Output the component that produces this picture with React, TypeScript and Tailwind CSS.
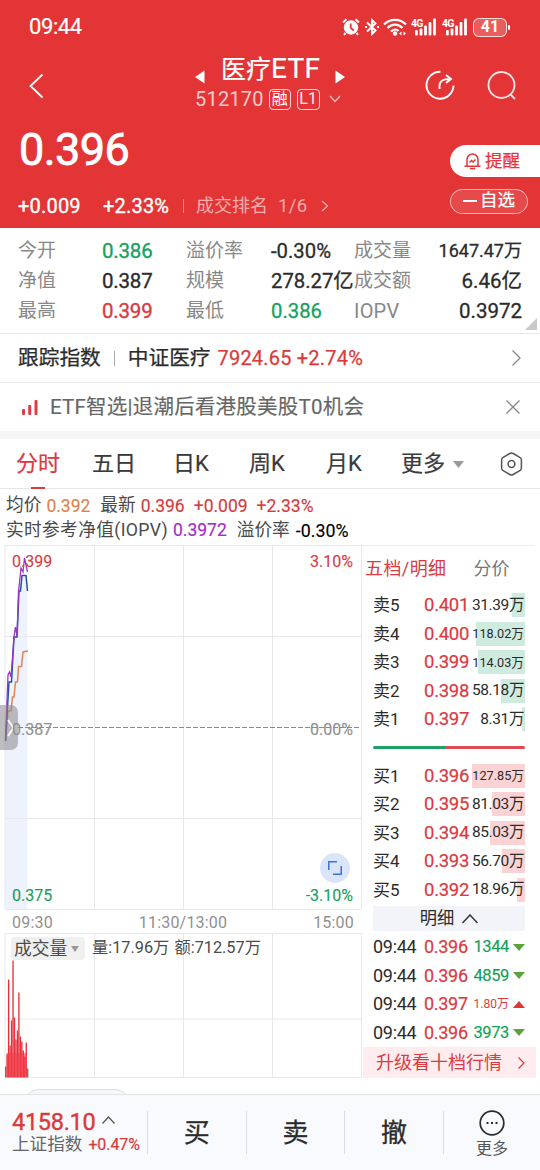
import React from 'react';

interface Level {
  label: string;
  price: string;
  volume: string;
  bar: number;
  small?: boolean;
}

interface Tick {
  price: string;
  volume: string;
  up?: boolean;
}

const sells: Level[] = [
  { label: '卖5', price: '0.401', volume: '31.39万', bar: 13 },
  { label: '卖4', price: '0.400', volume: '118.02万', bar: 49, small: true },
  { label: '卖3', price: '0.399', volume: '114.03万', bar: 47, small: true },
  { label: '卖2', price: '0.398', volume: '58.18万', bar: 24 },
  { label: '卖1', price: '0.397', volume: '8.31万', bar: 3 },
];

const buys: Level[] = [
  { label: '买1', price: '0.396', volume: '127.85万', bar: 53, small: true },
  { label: '买2', price: '0.395', volume: '81.03万', bar: 33 },
  { label: '买3', price: '0.394', volume: '85.03万', bar: 35 },
  { label: '买4', price: '0.393', volume: '56.70万', bar: 23 },
  { label: '买5', price: '0.392', volume: '18.96万', bar: 8 },
];

const ticks: Tick[] = [
  { price: '0.396', volume: '1344' },
  { price: '0.396', volume: '4859' },
  { price: '0.397', volume: '1.80万', up: true },
  { price: '0.396', volume: '3973' },
];

// [height, isGreen]
const volumeBars: [number, boolean][] = [
  [11, true], [23, false], [98, false], [32, false], [57, false], [117, false], [60, false], [38, false],
  [47, false], [85, false], [41, false], [36, false], [27, false], [21, false], [35, false], [9, true],
];

const Signal: React.FC = () => (
  <svg width="26" height="18" viewBox="0 0 26 18" fill="#fff">
    <text x="0" y="9" fontSize="10.5" fontWeight="700" fontFamily="Roboto, sans-serif" textLength="12.5">4G</text>
    <rect x="4" y="12" width="2.8" height="5.5" rx="1" />
    <rect x="8.6" y="10.5" width="2.8" height="7" rx="1" />
    <rect x="13.1" y="7.5" width="2.8" height="10" rx="1" />
    <rect x="17.6" y="4" width="2.8" height="13.5" rx="1" />
    <rect x="22.1" y="0.5" width="2.8" height="17" rx="1" />
  </svg>
);

const StatusBar: React.FC = () => (
  <div className="h-[54px] flex items-center pl-[29px] pr-[30px] text-white">
    <span className="text-[22px] tracking-[-0.4px] [-webkit-text-stroke:0.2px]">09:44</span>
    <div className="ml-auto flex items-center">
      <svg width="18" height="18" viewBox="0 0 18 18" fill="none">
        <circle cx="9" cy="9.500" r="7.200" fill="#fff" />
        <path d="M1 4.500 4.500 1.200M17 4.500 13.500 1.200M3.500 15 2 16.800M14.500 15 16 16.800" stroke="#fff" strokeWidth="2" />
        <path d="M8.700 5.500v4.300l3 2.700" stroke="#e33536" strokeWidth="1.700" />
      </svg>
      <svg className="ml-[5px]" width="14" height="18" viewBox="0 0 14 18" fill="none" stroke="#fff" strokeWidth="1.900">
        <path d="M2 4.500l8.500 8L7 16V2l3.500 3.500L2 13.500M0 9h2M12 9h2" />
      </svg>
      <svg className="ml-[4px]" width="24" height="18" viewBox="0 0 24 18" fill="none" stroke="#fff" strokeWidth="2.200">
        <path d="M1 6.500C7 .2 17 .2 23 6.500M4.500 10C9 5.500 15 5.500 19.500 10M8 13.500C10.500 11 13.500 11 15.500 13" />
        <circle cx="12" cy="15.500" r="2.200" fill="#fff" stroke="none" />
        <path d="M16 15.500l2.500-2v4zM23 15.500l-2.500-2v4z" fill="#fff" stroke="none" />
      </svg>
      <span className="ml-[4px]"><Signal /></span>
      <span className="ml-[5px]"><Signal /></span>
      <div className="ml-[5px] w-[34px] h-[19px] rounded-[6px] border-[1.5px] border-white/80 bg-white/20 flex items-center justify-center text-[16px] font-bold leading-none">
        41
      </div>
      <div className="ml-px w-[2px] h-[5px] rounded-full bg-white" />
    </div>
  </div>
);

const Header: React.FC = () => (
  <header className="h-[228px] shrink-0 bg-[#e33536] text-white">
    <StatusBar />
    <div className="h-[62px] flex items-start">
      <svg className="ml-7 mt-[19px]" width="16" height="26" viewBox="0 0 16 26" fill="none" stroke="#fff" strokeWidth="1.800">
        <path d="M14.500 1.500 2.500 13l12 11.500" />
      </svg>
      <div className="ml-[151px] w-[152px]">
        <div className="flex items-center h-[30px]">
          <svg width="10" height="14" viewBox="0 0 10 14" fill="#fff" className="mt-[15px]"><path d="M0 7 9.500.5v13z" /></svg>
          <span className="ml-4 text-[25px] whitespace-nowrap [-webkit-text-stroke:0.2px]">医疗<span className="text-[28px] tracking-[0.300px]">ETF</span></span>
          <svg width="10" height="14" viewBox="0 0 10 14" fill="#fff" className="ml-auto mr-[2px] mt-[15px]"><path d="M10 7 .5.5v13z" /></svg>
        </div>
        <div className="flex items-center h-[30px] text-white/75">
          <span className="text-[20px] tracking-[0.200px]">512170</span>
          <span className="ml-[5px] mt-px w-[22px] h-[21px] border-[1.500px] border-white/80 rounded-[4px] text-[16px] leading-[18px] text-center text-white">融</span>
          <span className="ml-[6px] mt-px w-[23px] h-[21px] border-[1.500px] border-white/80 rounded-[4px] text-[16px] leading-[18px] text-center text-white/90">L1</span>
          <svg className="ml-[9px]" width="12" height="8" viewBox="0 0 12 8" fill="none" stroke="#fff" strokeOpacity="0.7" strokeWidth="1.300"><path d="M1 1l5 5.500L11 1" /></svg>
        </div>
      </div>
      <svg className="ml-[78px] mt-[16px]" width="30" height="31" viewBox="0 0 30 31" fill="none" stroke="#fff" strokeWidth="1.900">
        <path d="M15.500 1.700A13.500 13.500 0 1 0 28.500 15.500" />
        <path d="M14.500 19v-3c0-5 3-7 11-7M21 5l5 4-5 4" />
      </svg>
      <svg className="ml-[32px] mt-[16px]" width="30" height="31" viewBox="0 0 30 31" fill="none" stroke="#fff" strokeOpacity="0.850" strokeWidth="1.900">
        <circle cx="14.500" cy="15" r="13" />
        <path d="M23.500 24.500 28 29" />
      </svg>
    </div>
    <div className="h-[76px] flex">
      <span className="ml-[19px] mt-[11px] h-[46px] leading-[46px] text-[45px] tracking-[-0.550px] [-webkit-text-stroke:0.800px]">0.396</span>
      <div className="ml-auto mt-[29px] w-[90px] h-[32px] rounded-l-full bg-white text-[#e33536] flex items-center pl-[14px]">
        <svg width="17" height="18" viewBox="0 0 17 18" fill="none" stroke="currentColor" strokeWidth="1.500">
          <path d="M3 14V7.500a5.500 5.500 0 0 1 11 0V14M.5 14.200h16M6 16.600h5M5.500 10.500l2-2 1.500 1.500 2.500-2.500" />
        </svg>
        <span className="ml-[4px] text-[17.500px] [-webkit-text-stroke:0.200px]">提醒</span>
      </div>
    </div>
    <div className="h-[26px] flex items-center mt-px">
      <span className="ml-[18px] w-[85px] text-[20px] tracking-[0.200px] [-webkit-text-stroke:0.350px]">+0.009</span>
      <span className="w-[80px] text-[20px] tracking-[0.200px] [-webkit-text-stroke:0.350px]">+2.33%</span>
      <span className="w-px h-[14px] bg-white/40" />
      <span className="ml-[12px] text-[18px] text-white/60">成交排名</span>
      <span className="ml-[10px] text-[18.500px] text-white/60 tracking-[0.400px]">1/6</span>
      <svg className="ml-[13px]" width="8" height="12" viewBox="0 0 8 12" fill="none" stroke="#fff" strokeOpacity="0.600" strokeWidth="1.200"><path d="M1 1l5.500 5L1 11" /></svg>
      <div className="relative -top-[5px] ml-auto mr-[12px] w-[78px] h-[25px] rounded-full border border-white/60 bg-white/10 flex items-center justify-center">
        <span className="w-[14px] h-[2px] bg-white" />
        <span className="ml-[3px] text-[17.500px] leading-none [-webkit-text-stroke:0.200px]">自选</span>
      </div>
    </div>
  </header>
);

const stats = [
  ['今开', '0.386', 'text-[#1a9f5e]', '溢价率', '-0.30%', 'text-[#2b2b2b]', '成交量', '1647.47万'],
  ['净值', '0.387', 'text-[#2b2b2b]', '规模', '278.27亿', 'text-[#2b2b2b]', '成交额', '6.46亿'],
  ['最高', '0.399', 'text-[#d93a3c]', '最低', '0.386', 'text-[#1a9f5e]', 'IOPV', '0.3972'],
];

const Stats: React.FC = () => (
  <section className="relative h-[106px] shrink-0 pt-[8px] border-b border-[#e8e8ea]">
    {stats.map((s) => (
      <div key={s[0]} className="h-[30px] pl-[18px] pr-[18px] grid grid-cols-[84px_84px_84px_84px_1fr] items-center text-[19px] text-[#888] whitespace-nowrap">
        <span>{s[0]}</span>
        <span className={`text-[20.500px] tracking-[-0.200px] [-webkit-text-stroke:0.350px] ${s[2]}`}>{s[1]}</span>
        <span>{s[3]}</span>
        <span className={`pl-px text-[20.300px] [-webkit-text-stroke:0.300px] ${s[5]}`}>{s[4]}</span>
        <span className="flex justify-between items-center">
          <span className={s[6] === 'IOPV' ? 'text-[20px] tracking-[0.200px]' : ''}>{s[6]}</span>
          <span className={s[7].length > 7 ? 'text-[18px] [-webkit-text-stroke:0.300px] text-[#2b2b2b]' : 'text-[20.500px] [-webkit-text-stroke:0.300px] text-[#2b2b2b]'}>{s[7]}</span>
        </span>
      </div>
    ))}
    <svg className="absolute right-[3px] bottom-[3px]" width="12" height="12" viewBox="0 0 12 12" fill="#c9c9cc"><path d="M12 0v12H0z" /></svg>
  </section>
);

const Tabs: React.FC = () => (
  <nav className="h-[50px] shrink-0 pt-[2px] flex items-center text-[22px] text-[#3a3a3a] [-webkit-text-stroke:0.200px] border-b border-[#e6e6e8] whitespace-nowrap">
    <div className="relative ml-[16px] w-[76px] text-[#dc3a3f]">
      分时
      <span className="absolute left-[15px] -bottom-[11px] w-[14px] h-[2px] bg-[#dc3a3f]" />
    </div>
    <span className="w-[81px]">五日</span>
    <span className="w-[76px]">日K</span>
    <span className="w-[77px]">周K</span>
    <span className="w-[75px]">月K</span>
    <span>更多</span>
    <svg className="ml-[8px]" width="11" height="7" viewBox="0 0 11 7" fill="#999"><path d="M0 0h11L5.500 7z" /></svg>
    <svg className="ml-[36px] -mt-[2px]" width="23" height="24" viewBox="0 0 23 24" fill="none" stroke="#555" strokeWidth="1.500">
      <path d="M9.800 1.500a3.400 3.400 0 0 1 3.400 0l6.600 3.800a3 3 0 0 1 1.600 2.700v8a3 3 0 0 1-1.600 2.700l-6.600 3.800a3.400 3.400 0 0 1-3.400 0l-6.600-3.800A3 3 0 0 1 1.600 16V8a3 3 0 0 1 1.600-2.700z" />
      <circle cx="11.500" cy="12" r="3.400" />
    </svg>
  </nav>
);

const PriceChart: React.FC = () => (
  <div className="relative h-[364px]">
    <svg className="block" width="362" height="364" viewBox="0 545 362 364" fill="none">
      <path d="M5 591 5 909H27.500V591L26 576H22L18.500 592 16.500 637 13.500 638 11 682 5 741z" fill="#edf2fc" />
      <path d="M5 545.500H361M5 636.500H361M5 818.500H361M94.500 545V909M183.500 545V909M272.500 545V909M361.500 545V909M5 545V909" stroke="#e6e8ec" />
      <path d="M18 727.500H361" stroke="#8a8a8a" strokeDasharray="5 2" />
      <path d="M5.500 741 8 711H11L12.500 697H14L15.500 682H17.500L18.500 666.500H21.500L23 652 28 651" stroke="#e5834d" strokeWidth="1.500" />
      <path d="M5.500 741 9 682H11.500L14 637H17L19 591H20.500L22 575.500H26L27.500 591" stroke="#2450a8" strokeWidth="1.500" />
      <path d="M5.500 738 8 675 9.500 672 11 677 14 637 15.500 627 17 636 18.500 592 21 568 23 572 24.500 558 27.500 572" stroke="#9b35c4" strokeWidth="1.300" />
    </svg>
    <div className="absolute left-0 top-[160px] w-[18px] h-[45px] rounded-r-[7px] bg-[#888]/55" />
    <svg className="absolute left-[7px] top-[174px]" width="8" height="18" viewBox="0 0 8 18" fill="none" stroke="#fff" strokeWidth="1.800"><path d="M1 1l5.500 8L1 17" /></svg>
    <div className="absolute inset-0 pl-[12px] pr-[8px] text-[16px] leading-[20px] [-webkit-text-stroke:0.150px]">
      <div className="pt-[7px] flex justify-between text-[#d63f45]"><span>0.399</span><span>3.10%</span></div>
      <div className="mt-[148px] flex justify-between text-[#909090]"><span>0.387</span><span>0.00%</span></div>
      <div className="mt-[146px] flex justify-between text-[#1a9f5e]"><span>0.375</span><span>-3.10%</span></div>
    </div>
    <div className="absolute left-[320px] top-[308px] w-[30px] h-[30px] rounded-full bg-[#dbe5fa] flex items-center justify-center">
      <svg width="14" height="14" viewBox="0 0 14 14" fill="none" stroke="#3672d9" strokeWidth="1.500"><path d="M.8 9V.8H9M13.200 5v8.200H5" /></svg>
    </div>
  </div>
);

const VolumeChart: React.FC = () => (
  <div className="relative h-[145px]">
    <svg className="block" width="362" height="145" viewBox="0 933 362 145">
      <path d="M5 933.500H361.500V1077.500H5zM5 1019H361M94.500 933V1078M183.500 933V1078M272.500 933V1078" stroke="#e6e8ec" fill="none" />
      {volumeBars.map(([h, green], i) => (
        <rect key={i} x={5 + i * 1.47} y={1077.5 - h} width="1.350" height={h} fill={green ? '#2f9a5a' : '#e8303c'} />
      ))}
      <rect x="6.500" y="1053" width="19.500" height="24" fill="#f43a46" fillOpacity="0.600" />
    </svg>
    <div className="absolute left-[11px] top-[4px] flex items-center text-[#4a4a4a] whitespace-nowrap">
      <div className="w-[74px] h-[23px] bg-[#f0f0f1] rounded-sm flex items-center pl-[3px]">
        <span className="text-[17.800px] leading-none">成交量</span>
        <svg className="ml-[4px]" width="8" height="6" viewBox="0 0 8 6" fill="#999"><path d="M0 0h8L4 6z" /></svg>
      </div>
      <span className="ml-[7px] text-[16.300px] leading-none">量:17.96万</span>
      <span className="ml-[5px] text-[16.300px] leading-none">额:712.57万</span>
    </div>
  </div>
);

const LevelRow: React.FC<{ level: Level; barClass: string }> = ({ level, barClass }) => (
  <div className="relative h-[28.500px] flex items-center text-[#2b2b2b] whitespace-nowrap">
    <div className={`absolute right-0 top-[2px] h-[24px] ${barClass}`} style={{ width: level.bar }} />
    <span className="text-[17px]">{level.label}</span>
    <span className="absolute right-[56px] text-[18.500px] tracking-[-0.300px] text-[#dc3a40] [-webkit-text-stroke:0.200px]">{level.price}</span>
    <span className={level.small ? 'relative ml-auto mr-px text-[12.700px]' : 'relative ml-auto mr-px text-[15.500px] tracking-[-0.400px]'}>{level.volume}</span>
  </div>
);

const OrderBook: React.FC = () => (
  <aside className="w-[178px] shrink-0">
    <div className="mr-[4px] h-[46px] pl-[4px] flex items-center text-[18px] border-t border-[#ececee]">
      <span className="text-[#dc3a40] tracking-[0.400px]">五档/明细</span>
      <span className="ml-[27px] text-[#777]">分价</span>
    </div>
    <div className="ml-[12px] w-[152px]">
      {sells.map((l) => <LevelRow key={l.label} level={l} barClass="bg-[#cfebdf]" />)}
      <div className="mt-[12px] mb-[13px] h-[3px] flex rounded-full overflow-hidden">
        <div className="w-[72px] bg-[#1fa065]" />
        <div className="flex-1 bg-[#df4b52]" />
      </div>
      {buys.map((l) => <LevelRow key={l.label} level={l} barClass="bg-[#fbd3d5]" />)}
      <div className="mt-[2px] mb-[2px] h-[25px] bg-[#f3f4f9] flex items-center justify-center text-[17.300px] text-[#2b2b2b]">
        明细
        <svg className="ml-[8px]" width="16" height="10" viewBox="0 0 16 10" fill="none" stroke="#333" strokeWidth="1.500"><path d="M.5 9 8 1l7.500 8" /></svg>
      </div>
      {ticks.map((t, i) => (
        <div key={i} className="h-[28.500px] flex items-center text-[#2b2b2b] whitespace-nowrap">
          <span className="w-[51px] text-[18px] tracking-[-0.300px]">09:44</span>
          <span className="text-[18px] tracking-[-0.300px] text-[#dc3a40] [-webkit-text-stroke:0.200px]">{t.price}</span>
          <span className={t.up ? 'ml-auto text-[12px] text-[#dc3a40]' : 'ml-auto text-[16.500px] tracking-[-0.400px] text-[#12a058] [-webkit-text-stroke:0.150px]'}>{t.volume}</span>
          <svg className="ml-[4px]" width="12" height="7" viewBox="0 0 12 7" fill={t.up ? '#e33434' : '#5ba23c'}>
            <path d={t.up ? 'M0 7h12L6 0z' : 'M0 0h12L6 7z'} />
          </svg>
        </div>
      ))}
    </div>
    <div className="ml-[2px] w-[173px] h-[31px] bg-[#ffecee] flex items-center pl-[13px] text-[#dc3a40]">
      <span className="text-[18px]">升级看十档行情</span>
      <svg className="ml-auto mr-[11px]" width="7" height="12" viewBox="0 0 7 12" fill="none" stroke="currentColor" strokeWidth="1.200"><path d="M.5.5 6 6 .5 11.500" /></svg>
    </div>
  </aside>
);

const BottomBar: React.FC = () => (
  <footer className="h-[76px] shrink-0 bg-[#f9fafd] border-t border-[#e4e4e8] flex items-center text-[#2b2b2b]">
    <div className="w-[147px] pl-[12px] whitespace-nowrap">
      <div className="h-[25px] flex items-center text-[23.500px] text-[#d93a3c]">
        <span className="tracking-[-0.300px] [-webkit-text-stroke:0.400px]">4158.10</span>
        <svg className="ml-[7px] -mt-[5px]" width="13" height="8" viewBox="0 0 13 8" fill="none" stroke="#555" strokeWidth="1.300"><path d="M.5 7.500 6.500 1l6 6.500" /></svg>
      </div>
      <div className="h-[21px] flex items-center text-[17.600px] text-[#666]">
        上证指数
        <span className="ml-[6px] text-[16px] text-[#d93a3c] tracking-[-0.100px] [-webkit-text-stroke:0.200px]">+0.47%</span>
      </div>
    </div>
    {['买', '卖', '撤'].map((t) => (
      <div key={t} className="w-[98.600px] h-[43px] pt-[2px] border-l border-[#dcdce0] flex items-center justify-center text-[26px] [-webkit-text-stroke:0.300px]">{t}</div>
    ))}
    <div className="flex-1 h-[43px] border-l border-[#dcdce0] flex flex-col items-center justify-center">
      <svg className="shrink-0 mt-[4px]" width="26" height="26" viewBox="0 0 26 26" fill="none" stroke="#2b2b2b" strokeWidth="1.700">
        <circle cx="13" cy="13" r="11.800" />
        <path d="M7.500 13h2M12 13h2M16.500 13h2" strokeWidth="2" />
      </svg>
      <span className="mt-[3px] text-[16px] leading-[20px] text-[#555]">更多</span>
    </div>
  </footer>
);

const App: React.FC = () => (
  <div className="w-[540px] h-[1170px] overflow-hidden bg-white font-[Roboto,'Noto_Sans_CJK_SC',sans-serif] leading-[1.2] flex flex-col">
    <Header />
    <Stats />
    <section className="h-[49px] shrink-0 flex items-center pl-[18px] pr-[19px] border-b border-[#e8e8ea] text-[20.700px] text-[#2b2b2b] [-webkit-text-stroke:0.250px]">
      跟踪指数
      <span className="mx-[13px] w-px h-[15px] bg-[#aaa]" />
      中证医疗
      <span className="ml-[7px] text-[20px] tracking-[0.200px] text-[#dc3a3c]">7924.65 +2.74%</span>
      <svg className="ml-auto" width="9" height="16" viewBox="0 0 9 16" fill="none" stroke="#888" strokeWidth="1.300"><path d="M.5.500 8 8 .5 15.500" /></svg>
    </section>
    <section className="h-[48px] shrink-0 flex items-center pl-[22px] pr-[20px] text-[20.500px] text-[#666]">
      <svg width="16" height="15" viewBox="0 0 16 15" fill="#d93f42"><rect y="9" width="3" height="6" rx="1" /><rect x="6.200" y="5" width="3" height="10" rx="1" /><rect x="12.500" width="3" height="15" rx="1" /></svg>
      <span className="ml-[12px] tracking-[0.220px] [-webkit-text-stroke:0.150px]">ETF智选|退潮后看港股美股T0机会</span>
      <svg className="ml-auto" width="14" height="14" viewBox="0 0 14 14" fill="none" stroke="#888" strokeWidth="1.300"><path d="M.5.500l13 13M13.500.5l-13 13" /></svg>
    </section>
    <div className="h-[8px] shrink-0 bg-[#f6f6f7]" />
    <Tabs />
    <section className="h-[56px] shrink-0 pl-[6px] pt-[5px] text-[17.700px] text-[#4a4a4a] whitespace-nowrap">
      <div className="h-[24px] flex items-center">
        均价
        <span className="ml-[5px] text-[17.500px] text-[#e0824c] [-webkit-text-stroke:0.150px]">0.392</span>
        <span className="ml-[10px]">最新</span>
        <span className="ml-[5px] text-[17.500px] text-[#d93a3c] [-webkit-text-stroke:0.150px]">0.396</span>
        <span className="ml-[9px] text-[17.500px] text-[#d93a3c] [-webkit-text-stroke:0.150px]">+0.009</span>
        <span className="ml-[9px] text-[17.500px] text-[#d93a3c] [-webkit-text-stroke:0.150px]">+2.33%</span>
      </div>
      <div className="h-[25px] flex items-center">
        <span className="tracking-[0.350px]">实时参考净值(IOPV)</span>
        <span className="ml-[5px] text-[17.500px] text-[#a52ac8] [-webkit-text-stroke:0.150px]">0.3972</span>
        <span className="ml-[10px]">溢价率</span>
        <span className="ml-[6px] text-[17.800px] text-black [-webkit-text-stroke:0.150px]">-0.30%</span>
      </div>
    </section>
    <div className="h-[533px] shrink-0 flex">
      <div className="w-[361px] shrink-0">
        <PriceChart />
        <div className="h-[24px] border-t border-[#e6e8ec] ml-[5px] pl-[7px] pr-[7px] pt-[2px] flex items-center justify-between text-[16px] tracking-[0.200px] text-[#909090]">
          <span>09:30</span><span>11:30/13:00</span><span>15:00</span>
        </div>
        <VolumeChart />
      </div>
      <OrderBook />
    </div>
    <div className="h-[16px] shrink-0 pl-[22px] pt-[11px] overflow-hidden">
      <div className="w-[110px] h-[36px] rounded-full border border-[#dedee2] bg-[#f8f8fa]" />
    </div>
    <BottomBar />
  </div>
);

export default App;
